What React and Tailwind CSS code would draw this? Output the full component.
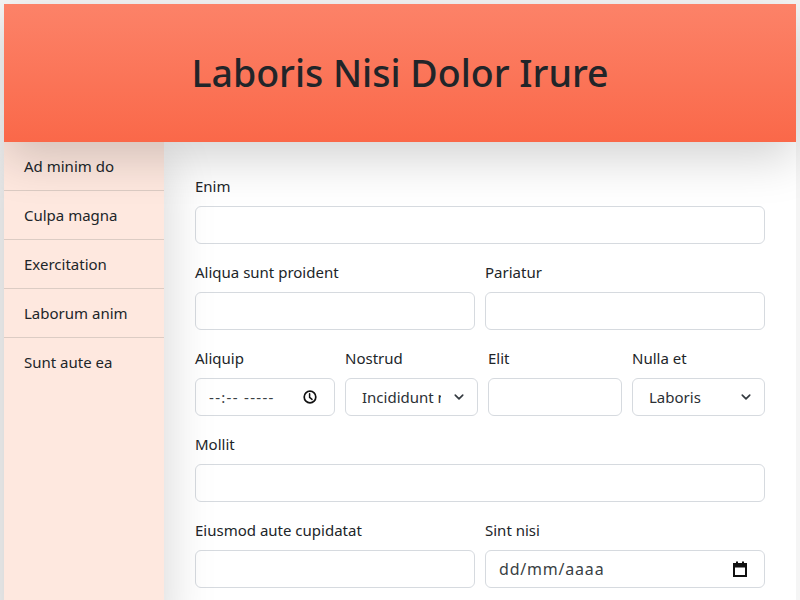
import React from "react";

const font = { fontFamily: '"Segoe UI", "Noto Sans", "Open Sans", sans-serif' };

function Label({ children }) {
  return <label className="block mb-2 text-[15px] leading-6 text-[#212529]">{children}</label>;
}

function TextInput() {
  return (
    <input
      type="text"
      className="block w-full h-[38px] rounded-[6px] border border-[#d6dadf] bg-white px-3 text-[15px] text-[#212529] outline-none"
    />
  );
}

function Chevron() {
  return (
    <svg className="pointer-events-none absolute right-[14px] top-1/2 -translate-y-1/2" width="10" height="10" viewBox="0 0 16 16">
      <path d="m2 5 6 6 6-6" fill="none" stroke="#343a40" strokeLinecap="round" strokeLinejoin="round" strokeWidth="2.6" />
    </svg>
  );
}

function Select({ value, options }) {
  return (
    <div className="relative">
      <select
        defaultValue={value}
        className="block w-full h-[38px] appearance-none rounded-[6px] border border-[#d6dadf] bg-white pl-4 pr-9 text-[15px] text-[#2b3035] outline-none"
      >
        {options.map((o) => (
          <option key={o}>{o}</option>
        ))}
      </select>
      <Chevron />
    </div>
  );
}

function ClockIcon() {
  return (
    <svg className="pointer-events-none absolute right-[18px] top-1/2 -translate-y-1/2" width="14" height="14" viewBox="0 0 14 14">
      <circle cx="7" cy="7" r="5.8" fill="none" stroke="#111" strokeWidth="1.7" />
      <path d="M6.6 3.8v3.6l2.4 2" fill="none" stroke="#111" strokeWidth="1.5" strokeLinecap="round" />
    </svg>
  );
}

function CalendarIcon() {
  return (
    <svg className="pointer-events-none absolute right-[18px] top-1/2 -translate-y-1/2" width="14" height="16" viewBox="0 0 14 16">
      <rect x="1" y="3" width="12" height="12" fill="none" stroke="#111" strokeWidth="2" />
      <rect x="1" y="3" width="12" height="3.5" fill="#111" />
      <rect x="3" y="0.5" width="2" height="3" fill="#111" />
      <rect x="9" y="0.5" width="2" height="3" fill="#111" />
    </svg>
  );
}

function FakeField({ placeholder, icon, extra }) {
  return (
    <div className="relative">
      <input
        type="text"
        placeholder={placeholder}
        className={
          "block w-full h-[38px] rounded-[6px] border border-[#d6dadf] bg-white pl-[13px] pr-9 text-[#212529] placeholder:text-[#3a3f44] outline-none " +
          extra
        }
      />
      {icon}
    </div>
  );
}

const navItems = ["Ad minim do", "Culpa magna", "Exercitation", "Laborum anim", "Sunt aute ea"];

export default function App() {
  return (
    <div className="min-h-screen bg-[#f5f5f5] p-1" style={font}>
      <header className="relative z-20 flex h-[138px] items-center justify-center bg-gradient-to-b from-[#fc8268] to-[#fa6849] shadow-[0_1rem_3rem_rgba(0,0,0,0.175)]">
        <h1 className="text-[37.5px] font-medium leading-tight text-[#212529]">Laboris Nisi Dolor Irure</h1>
      </header>
      <div className="flex bg-white">
        <aside className="relative z-10 w-[160px] shrink-0 bg-[#fee8df] shadow-[0_1rem_3rem_rgba(0,0,0,0.175)]">
          <ul>
            {navItems.map((item, i) => (
              <li
                key={item}
                className={
                  "px-5 py-3 text-[15px] leading-6 text-[#212529] " +
                  (i < navItems.length - 1 ? "border-b border-[#dcccc4]" : "")
                }
              >
                {item}
              </li>
            ))}
          </ul>
        </aside>
        <main className="flex-1 px-[31px] pt-8 pb-6">
          <div className="mb-4">
            <Label>Enim</Label>
            <TextInput />
          </div>
          <div className="mb-4 grid grid-cols-2 gap-x-[10px]">
            <div>
              <Label>Aliqua sunt proident</Label>
              <TextInput />
            </div>
            <div>
              <Label>Pariatur</Label>
              <TextInput />
            </div>
          </div>
          <div className="mb-4 grid grid-cols-[140px_133px_134px_133px] gap-x-[10px]">
            <div>
              <Label>Aliquip</Label>
              <FakeField placeholder="--:-- -----" icon={<ClockIcon />} extra="text-[15px] tracking-[1.3px]" />
            </div>
            <div>
              <Label>Nostrud</Label>
              <Select value="Incididunt mollit" options={["Incididunt mollit", "Velit esse", "Magna aliqua"]} />
            </div>
            <div>
              <Label>Elit</Label>
              <TextInput />
            </div>
            <div>
              <Label>Nulla et</Label>
              <Select value="Laboris" options={["Laboris", "Consequat", "Tempor"]} />
            </div>
          </div>
          <div className="mb-4">
            <Label>Mollit</Label>
            <TextInput />
          </div>
          <div className="mb-4 grid grid-cols-2 gap-x-[10px]">
            <div>
              <Label>Eiusmod aute cupidatat</Label>
              <TextInput />
            </div>
            <div>
              <Label>Sint nisi</Label>
              <FakeField placeholder="dd/mm/aaaa" icon={<CalendarIcon />} extra="text-[16px] tracking-[0.8px]" />
            </div>
          </div>
        </main>
      </div>
    </div>
  );
}
